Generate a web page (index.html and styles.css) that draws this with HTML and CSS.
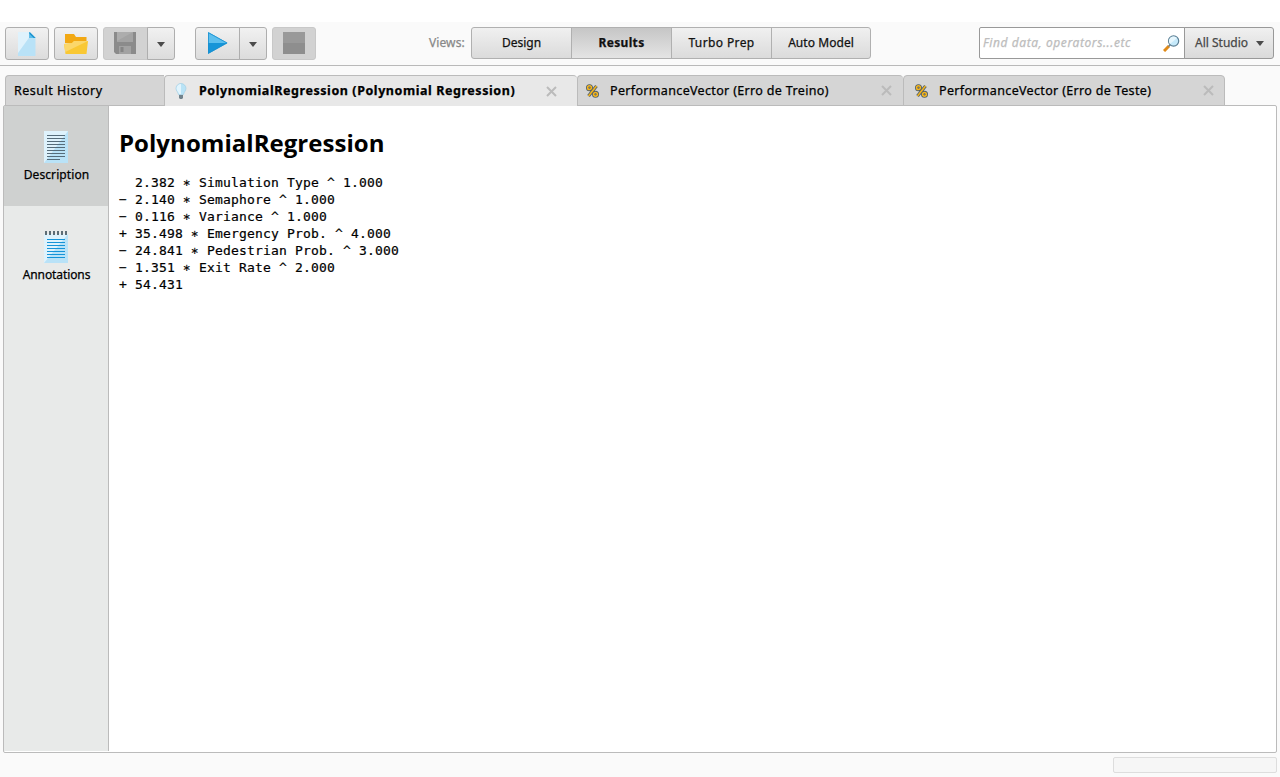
FILE: index.html
```html
<!DOCTYPE html>
<html lang="en">
<head>
<meta charset="utf-8">
<title>PolynomialRegression</title>
<link rel="stylesheet" href="styles.css">
</head>
<body>
<header class="toolbar">
  <button class="btn file"><svg width="20" height="24" viewBox="0 0 20 24"><path fill="#b9e2f7" d="M1 0h11.500L18.500 6v18H1z"/><path fill="#dff2fc" d="M1 0h11.500v5L1 21z"/><path fill="#1593d2" d="M12.500 0l6 6h-6z"/><path fill="#5bbdeb" d="M12.500 0v6h6z"/><path fill="#168fca" d="M12.500 0l6 6-2-.2-4-4z"/></svg></button>
  <button class="btn folder"><svg width="24" height="20" viewBox="0 0 24 20"><path fill="#f2a813" d="M1 0h9l2 3h10.500v6H1z"/><path fill="#f9c834" d="M0 10l8-1 2-2h14l-1.500 13H1.500z"/><path fill="#fbd76a" d="M0 10l8-1 2-2h14L1.200 18z"/></svg></button>
  <div class="group">
    <button class="btn disabled left save"><svg width="22" height="22" viewBox="0 0 22 22"><path fill="#8b8b8b" d="M0 0h22v22H2l-2-2z"/><path fill="#a3a3a3" d="M3 0h16v10H3z"/><path fill="#adadad" d="M3 0h16L3 9z"/><path fill="#a2a2a2" d="M5 14h12v8H5z"/><path fill="#858585" d="M6.500 15h3v5h-3z"/></svg></button>
    <button class="btn right arrow"><i class="caret"></i></button>
  </div>
  <div class="group run">
    <button class="btn left play"><svg width="20" height="22" viewBox="0 0 20 22"><path fill="#1695d8" d="M0 0l19.500 11L0 22z"/><path fill="#5cbfee" d="M0 0l19.500 11H0z"/><path fill="none" stroke="#198fce" stroke-width=".8" d="M.5.800L19 11 .5 21.200z"/></svg></button>
    <button class="btn right arrow"><i class="caret"></i></button>
  </div>
  <button class="btn disabled stop"><i class="square"></i></button>
  <span class="views-label">Views:</span>
  <nav class="views">
    <button class="view"><span class="t-design">Design</span></button>
    <button class="view selected"><span class="t-results">Results</span></button>
    <button class="view"><span class="t-turbo">Turbo Prep</span></button>
    <button class="view"><span class="t-auto">Auto Model</span></button>
  </nav>
  <div class="search">
    <div class="field"><span class="hint">Find data, operators...etc</span>
      <svg width="17" height="17" viewBox="0 0 17 17"><path stroke="#e08a18" stroke-width="3" d="M1 16l5-5"/><path stroke="#6a7f8c" stroke-width="1.500" d="M5.500 11.500L8 9"/><circle cx="10.600" cy="6" r="5.100" fill="#c5e9fa" stroke="#5b7f94" stroke-width="1.200"/><path fill="#e6f6fd" d="M7 9a4.400 4.400 0 0 1 7-6z"/></svg>
    </div>
    <button class="scope"><span>All Studio</span><i class="caret"></i></button>
  </div>
</header>
<nav class="tabs">
  <div class="tab history"><span class="t-history">Result History</span></div>
  <div class="tab active"><svg class="bulb" width="12" height="16" viewBox="0 0 12 16"><path fill="#b9e3f6" stroke="#9acbe2" stroke-width=".6" d="M6 .5a5 5 0 0 0-5 5c0 2 2 3.500 2.500 6h5C9 9 11 7.500 11 5.500a5 5 0 0 0-5-5z"/><path fill="#e1f4fd" d="M6 1a4.500 4.500 0 0 0-4.500 4.500c0 2 2 3.500 2.500 5.500h2z"/><path fill="#71828c" d="M4 12h4v3l-1 1H5l-1-1z"/></svg><span class="t-poly">PolynomialRegression (Polynomial Regression)</span><svg class="close" width="11" height="11" viewBox="0 0 11 11"><path d="M1 1l9 9M10 1l-9 9"/></svg></div>
  <div class="tab treino"><svg class="pct" width="13" height="14" viewBox="0 0 13 14"><g fill="none" stroke="#505f68" stroke-width="3.200"><circle cx="3.500" cy="3.700" r="1.900"/><circle cx="9.500" cy="10.300" r="1.900"/><path d="M10.500 2L2.500 12"/></g><g fill="none" stroke="#f5b51d" stroke-width="1.500"><circle cx="3.500" cy="3.700" r="1.900"/><circle cx="9.500" cy="10.300" r="1.900"/><path d="M10.500 2L2.500 12"/></g></svg><span class="t-treino">PerformanceVector (Erro de Treino)</span><svg class="close" width="11" height="11" viewBox="0 0 11 11"><path d="M1 1l9 9M10 1l-9 9"/></svg></div>
  <div class="tab teste"><svg class="pct" width="13" height="14" viewBox="0 0 13 14"><g fill="none" stroke="#505f68" stroke-width="3.200"><circle cx="3.500" cy="3.700" r="1.900"/><circle cx="9.500" cy="10.300" r="1.900"/><path d="M10.500 2L2.500 12"/></g><g fill="none" stroke="#f5b51d" stroke-width="1.500"><circle cx="3.500" cy="3.700" r="1.900"/><circle cx="9.500" cy="10.300" r="1.900"/><path d="M10.500 2L2.500 12"/></g></svg><span class="t-teste">PerformanceVector (Erro de Teste)</span><svg class="close" width="11" height="11" viewBox="0 0 11 11"><path d="M1 1l9 9M10 1l-9 9"/></svg></div>
</nav>
<main class="panel">
  <aside class="side">
    <div class="item current"><svg width="24" height="32" viewBox="0 0 24 32"><path fill="#b9e2f7" d="M0 0h24v32H0z"/><path fill="#def2fc" d="M0 0h24L0 32z"/><path stroke="#566c7a" d="M3 4.500h18M3 7.500h18M3 10.500h18M3 13.500h18M3 16.500h18M3 19.500h18M3 22.500h18M3 25.500h18M3 28.500h13"/></svg><span class="t-desc">Description</span></div>
    <div class="item"><svg width="24" height="32" viewBox="0 0 24 32"><path fill="#b9e2f7" d="M0 3h24v29H0z"/><path fill="#def2fc" d="M0 3h24L0 32z"/><path stroke="#5d6d76" stroke-width="4" stroke-dasharray="2 2" d="M1 2h22"/><path stroke="#1594d8" d="M3 8.500h18M3 11.500h18M3 14.500h18M3 17.500h18M3 20.500h18M3 23.500h18M3 26.500h18"/></svg><span class="t-anno">Annotations</span></div>
  </aside>
  <section class="content">
    <h1>PolynomialRegression</h1>
<pre>  2.382 ∗ Simulation Type ^ 1.000
− 2.140 ∗ Semaphore ^ 1.000
− 0.116 ∗ Variance ^ 1.000
+ 35.498 ∗ Emergency Prob. ^ 4.000
− 24.841 ∗ Pedestrian Prob. ^ 3.000
− 1.351 ∗ Exit Rate ^ 2.000
+ 54.431</pre>
  </section>
</main>
<footer class="status"><div class="progress"></div></footer>
</body>
</html>
```
FILE: styles.css
```css
* { box-sizing: border-box; }
body { margin: 0; padding-top: 22px; width: 1280px; height: 777px; overflow: hidden; display: flex; flex-direction: column; background: linear-gradient(#fff 22px, #fafafa 22px); font: 12px/16px "Noto Sans", sans-serif; color: #111; }
button { margin: 0; padding: 0; font: inherit; color: inherit; }
svg { display: block; flex: none; fill: none; }
span { white-space: nowrap; -webkit-text-stroke: .25px currentColor; }
.toolbar { height: 44px; flex: none; display: flex; align-items: flex-start; padding: 5px 6px 0 5px; border-bottom: 1px solid #b9b9b9; }
.btn { width: 44px; height: 33px; border: 1px solid #aeaeae; border-radius: 3px; background: linear-gradient(#f1f1f1, #dcdcdc); display: flex; align-items: center; justify-content: center; }
.folder { margin-left: 5px; }
.group { display: flex; margin-left: 5px; }
.group.run { margin-left: 20px; }
.left { width: 45px; border-radius: 3px 0 0 3px; }
.right { width: 28px; margin-left: -1px; border-radius: 0 3px 3px 0; }
.disabled { background: #d2d2d2; border-color: #c8c8c8; }
.btn.save { padding: 0 2px 2px 0; }
.btn.play, .btn.stop { padding-bottom: 1px; }
.stop { margin-left: 5px; }
.square { width: 22px; height: 22px; background: linear-gradient(#999 50%, #8e8e8e 50%); }
.caret { border: 4.500px solid transparent; border-top: 5px solid #4b4b4b; border-bottom: 0; }
.arrow .caret { margin-top: 1px; }
.views-label { width: 42px; margin: 8px 0 0 113px; color: #888; letter-spacing: .1px; }
.views { display: flex; }
.view { width: 101px; height: 32px; margin-right: -1px; border: 1px solid #b0b0b0; background: linear-gradient(#f0f0f0, #dbdbdb); }
.view:first-child { border-radius: 3px 0 0 3px; }
.view:last-child { width: 100px; margin: 0; border-radius: 0 3px 3px 0; }
.view.selected { background: linear-gradient(#c6c6c6, #e4e4e4); font-weight: bold; }
.t-results { letter-spacing: .35px; }
.t-turbo { letter-spacing: .38px; }
.t-auto { letter-spacing: .05px; }
.search { display: flex; margin-left: auto; width: 295px; height: 32px; }
.field { width: 206px; display: flex; align-items: center; justify-content: space-between; padding: 0 4px 0 3px; border: 1px solid #999; border-radius: 2px 0 0 2px; background: #fff; }
.hint { color: #bdbdbd; font-style: italic; letter-spacing: .58px; }
.scope { flex: 1; margin-left: -1px; border: 1px solid #999; border-radius: 0 3px 3px 0; background: linear-gradient(#f0f0f0, #dadada); color: #484848; display: flex; align-items: center; justify-content: space-between; padding: 0 9px 0 10px; }
.tabs { height: 40px; margin-bottom: -1px; flex: none; display: flex; padding: 9px 0 0 5px; position: relative; z-index: 1; }
.tab { height: 31px; display: flex; align-items: center; border: 1px solid #bbb; border-radius: 4px 4px 0 0; background: #d5d5d5; font-size: 12.500px; color: #000; }
.history { width: 159px; padding-left: 8px; border-right: 0; border-top-right-radius: 0; }
.active { width: 413px; padding: 0 20px 0 10px; border-bottom: 0; border-right: 0; background: #e8e8e8; font-weight: bold; }
.treino { width: 326px; border-right: 0; padding: 0 11px 0 8px; }
.teste { width: 322px; padding: 0 10px 0 11px; }
.t-history { letter-spacing: .5px; }
.t-poly { letter-spacing: .57px; }
.t-treino, .t-teste { letter-spacing: .34px; }
.bulb { margin-right: 12px; }
.pct { margin-right: 11px; }
.close { margin-left: auto; stroke: #bbb; stroke-width: 2; }
.panel { width: 1274px; height: 648px; flex: none; margin-left: 3px; display: flex; border: 1px solid #bbb; border-radius: 2px; background: #fff; }
.side { width: 105px; height: 645px; border-right: 1px solid #bbb; background: #e8eae9; color: #000; }
.item { height: 100px; padding-top: 25px; display: flex; flex-direction: column; align-items: center; }
.item span { margin-top: 4px; }
.t-desc { letter-spacing: .1px; padding-left: 1px; }
.t-anno { letter-spacing: -.1px; padding-left: 1px; }
.current { background: #cfd1d0; }
.content { padding: 20px 10px; color: #000; }
h1 { margin: 0; font: bold 24px/33px "Open Sans", sans-serif; letter-spacing: .04px; }
pre { margin: 15px 0 0; font: 13px/17px "DejaVu Sans Mono", monospace; letter-spacing: .174px; -webkit-text-stroke: .2px #000; }
.status { height: 24px; display: flex; justify-content: flex-end; padding: 4px 3px 4px 0; }
.progress { width: 164px; height: 16px; border: 1px solid #ddd; border-radius: 2px; background: #f6f6f6; }
```
